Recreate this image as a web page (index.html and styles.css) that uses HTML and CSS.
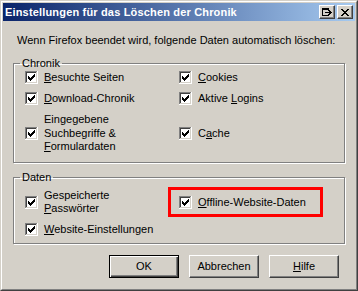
FILE: index.html
```html
<!DOCTYPE html>
<html lang="de">
<head>
<meta charset="utf-8">
<title>Einstellungen für das Löschen der Chronik</title>
<link rel="stylesheet" href="styles.css">
</head>
<body>
<svg class="defs" width="0" height="0" aria-hidden="true">
  <symbol id="chk" viewBox="0 0 13 13">
    <rect x="0" y="0" width="13" height="13" fill="#ffffff"/>
    <rect x="0" y="0" width="12" height="1" fill="#808080"/>
    <rect x="0" y="0" width="1" height="12" fill="#808080"/>
    <rect x="1" y="1" width="10" height="1" fill="#404040"/>
    <rect x="1" y="1" width="1" height="10" fill="#404040"/>
    <rect x="1" y="11" width="11" height="1" fill="#d4d0c8"/>
    <rect x="11" y="1" width="1" height="11" fill="#d4d0c8"/>
    <rect x="0" y="12" width="13" height="1" fill="#ffffff"/>
    <rect x="12" y="0" width="1" height="13" fill="#ffffff"/>
    <rect x="3" y="5" width="1" height="3" fill="#000"/>
    <rect x="4" y="6" width="1" height="3" fill="#000"/>
    <rect x="5" y="7" width="1" height="3" fill="#000"/>
    <rect x="6" y="6" width="1" height="3" fill="#000"/>
    <rect x="7" y="5" width="1" height="3" fill="#000"/>
    <rect x="8" y="4" width="1" height="3" fill="#000"/>
    <rect x="9" y="3" width="1" height="3" fill="#000"/>
  </symbol>
</svg>
<div class="window">
  <div class="frame">
    <div class="titlebar">
      <span class="title">Einstellungen für das Löschen der Chronik</span>
      <div class="caption-btns">
        <span class="cbtn">
          <svg width="10" height="8" viewBox="0 0 10 8" shape-rendering="crispEdges">
            <rect x="0" y="0" width="7" height="2" fill="#000"/>
            <rect x="0" y="0" width="1" height="8" fill="#000"/>
            <rect x="0" y="7" width="7" height="1" fill="#000"/>
            <rect x="6" y="0" width="1" height="3" fill="#000"/>
            <rect x="6" y="6" width="1" height="2" fill="#000"/>
            <rect x="3" y="4" width="4" height="1" fill="#000"/>
            <rect x="7" y="2" width="1" height="5" fill="#000"/>
            <rect x="8" y="3" width="1" height="3" fill="#000"/>
            <rect x="9" y="4" width="1" height="1" fill="#000"/>
          </svg>
        </span>
        <span class="cbtn">
          <svg width="8" height="7" viewBox="0 0 8 7" shape-rendering="crispEdges">
            <rect x="0" y="0" width="2" height="1" fill="#000"/>
            <rect x="6" y="0" width="2" height="1" fill="#000"/>
            <rect x="1" y="1" width="2" height="1" fill="#000"/>
            <rect x="5" y="1" width="2" height="1" fill="#000"/>
            <rect x="2" y="2" width="4" height="1" fill="#000"/>
            <rect x="3" y="3" width="2" height="1" fill="#000"/>
            <rect x="2" y="4" width="4" height="1" fill="#000"/>
            <rect x="1" y="5" width="2" height="1" fill="#000"/>
            <rect x="5" y="5" width="2" height="1" fill="#000"/>
            <rect x="0" y="6" width="2" height="1" fill="#000"/>
            <rect x="6" y="6" width="2" height="1" fill="#000"/>
          </svg>
        </span>
      </div>
    </div>
    <div class="content">
      <p class="intro">Wenn Firefox beendet wird, folgende Daten automatisch löschen:</p>
      <fieldset class="group group-history">
        <legend>Chronik</legend>
        <div class="grid">
          <div class="item"><svg class="cb"><use href="#chk"/></svg><span class="lbl"><u>B</u>esuchte Seiten</span></div>
          <div class="item"><svg class="cb"><use href="#chk"/></svg><span class="lbl"><u>C</u>ookies</span></div>
          <div class="item"><svg class="cb"><use href="#chk"/></svg><span class="lbl"><u>D</u>ownload-Chronik</span></div>
          <div class="item"><svg class="cb"><use href="#chk"/></svg><span class="lbl">Aktive <u>L</u>ogins</span></div>
          <div class="item"><svg class="cb"><use href="#chk"/></svg><span class="lbl multi">Eingegebene<br>Suchbegriffe &amp;<br><u>F</u>ormulardaten</span></div>
          <div class="item"><svg class="cb"><use href="#chk"/></svg><span class="lbl">C<u>a</u>che</span></div>
        </div>
      </fieldset>
      <fieldset class="group group-data">
        <legend>Daten</legend>
        <div class="grid grid-data">
          <div class="item"><svg class="cb"><use href="#chk"/></svg><span class="lbl multi">Gespeicherte<br><u>P</u>asswörter</span></div>
          <div class="item highlight"><svg class="cb"><use href="#chk"/></svg><span class="lbl"><u>O</u>ffline-Website-Daten</span></div>
          <div class="item"><svg class="cb"><use href="#chk"/></svg><span class="lbl"><u>W</u>ebsite-Einstellungen</span></div>
        </div>
      </fieldset>
      <div class="buttons">
        <span class="btn default">OK</span>
        <span class="btn">Abbrechen</span>
        <span class="btn"><u>H</u>ilfe</span>
      </div>
    </div>
  </div>
</div>
</body>
</html>
```
FILE: styles.css
```css
html, body {
  margin: 0;
  padding: 0;
  background: #d4d0c8;
}
body {
  font-family: "Liberation Sans", Arial, sans-serif;
  font-size: 11px;
  line-height: 13px;
  color: #000;
}
.defs {
  position: absolute;
  width: 0;
  height: 0;
}
u {
  text-decoration: underline;
  text-underline-offset: 1px;
}
.window {
  width: 358px;
  height: 291px;
  box-sizing: border-box;
  border: 1px solid;
  border-color: #d4d0c8 #404040 #404040 #d4d0c8;
  background: #d4d0c8;
}
.frame {
  height: 100%;
  box-sizing: border-box;
  border: 1px solid;
  border-color: #ffffff #808080 #808080 #ffffff;
  padding: 1px;
  display: flex;
  flex-direction: column;
}
.titlebar {
  height: 18px;
  background: linear-gradient(to right, #0a246a, #a6caf0);
  display: flex;
  align-items: center;
  justify-content: space-between;
  padding: 0 2px 0 2px;
}
.title {
  color: #fff;
  font-weight: bold;
  font-size: 11px;
  letter-spacing: 0.17px;
  white-space: nowrap;
}
.caption-btns {
  display: flex;
  gap: 2px;
}
.cbtn {
  width: 16px;
  height: 14px;
  box-sizing: border-box;
  border: 1px solid;
  border-color: #ffffff #404040 #404040 #ffffff;
  box-shadow: inset -1px -1px #808080;
  background: #d4d0c8;
  display: flex;
  align-items: center;
  justify-content: center;
}
.cbtn svg {
  display: block;
}
.content {
  padding: 13px 10px 0 10px;
  display: flex;
  flex-direction: column;
}
.intro {
  margin: 0 0 10px 4px;
  white-space: nowrap;
}
.group {
  margin: 0;
  border: 1px solid #808080;
  box-shadow: inset 1px 1px #ffffff, 1px 1px #ffffff;
  padding: 1px 0 8px 11px;
  min-width: 0;
}
.group legend {
  padding: 0 2px;
  margin-left: -5px;
  line-height: 13px;
}
.group-data {
  margin-top: 8px;
  padding-top: 5px;
  padding-bottom: 7px;
}
.grid {
  display: grid;
  grid-template-columns: 154px 1fr;
  row-gap: 8px;
  align-items: center;
}
.grid-data {
  row-gap: 7px;
}
.item {
  display: flex;
  align-items: center;
  gap: 6px;
}
.cb {
  width: 13px;
  height: 13px;
  flex: none;
  display: block;
}
.lbl {
  white-space: nowrap;
}
.lbl.multi {
  line-height: 13.5px;
}
.highlight {
  position: relative;
}
.highlight::after {
  content: "";
  position: absolute;
  left: -11px;
  top: -9px;
  width: 155px;
  height: 30px;
  box-sizing: border-box;
  border: 3px solid #ff0000;
}
.buttons {
  margin-top: 11px;
  display: flex;
  justify-content: flex-end;
  gap: 10px;
  padding-right: 6px;
}
.btn {
  width: 70px;
  height: 23px;
  box-sizing: border-box;
  border: 1px solid;
  border-color: #ffffff #404040 #404040 #ffffff;
  box-shadow: inset -1px -1px #808080;
  display: flex;
  align-items: center;
  justify-content: center;
}
.btn.default {
  border-color: #000;
  box-shadow: inset 1px 1px #ffffff, inset -1px -1px #404040, inset -2px -2px #808080;
}
```
